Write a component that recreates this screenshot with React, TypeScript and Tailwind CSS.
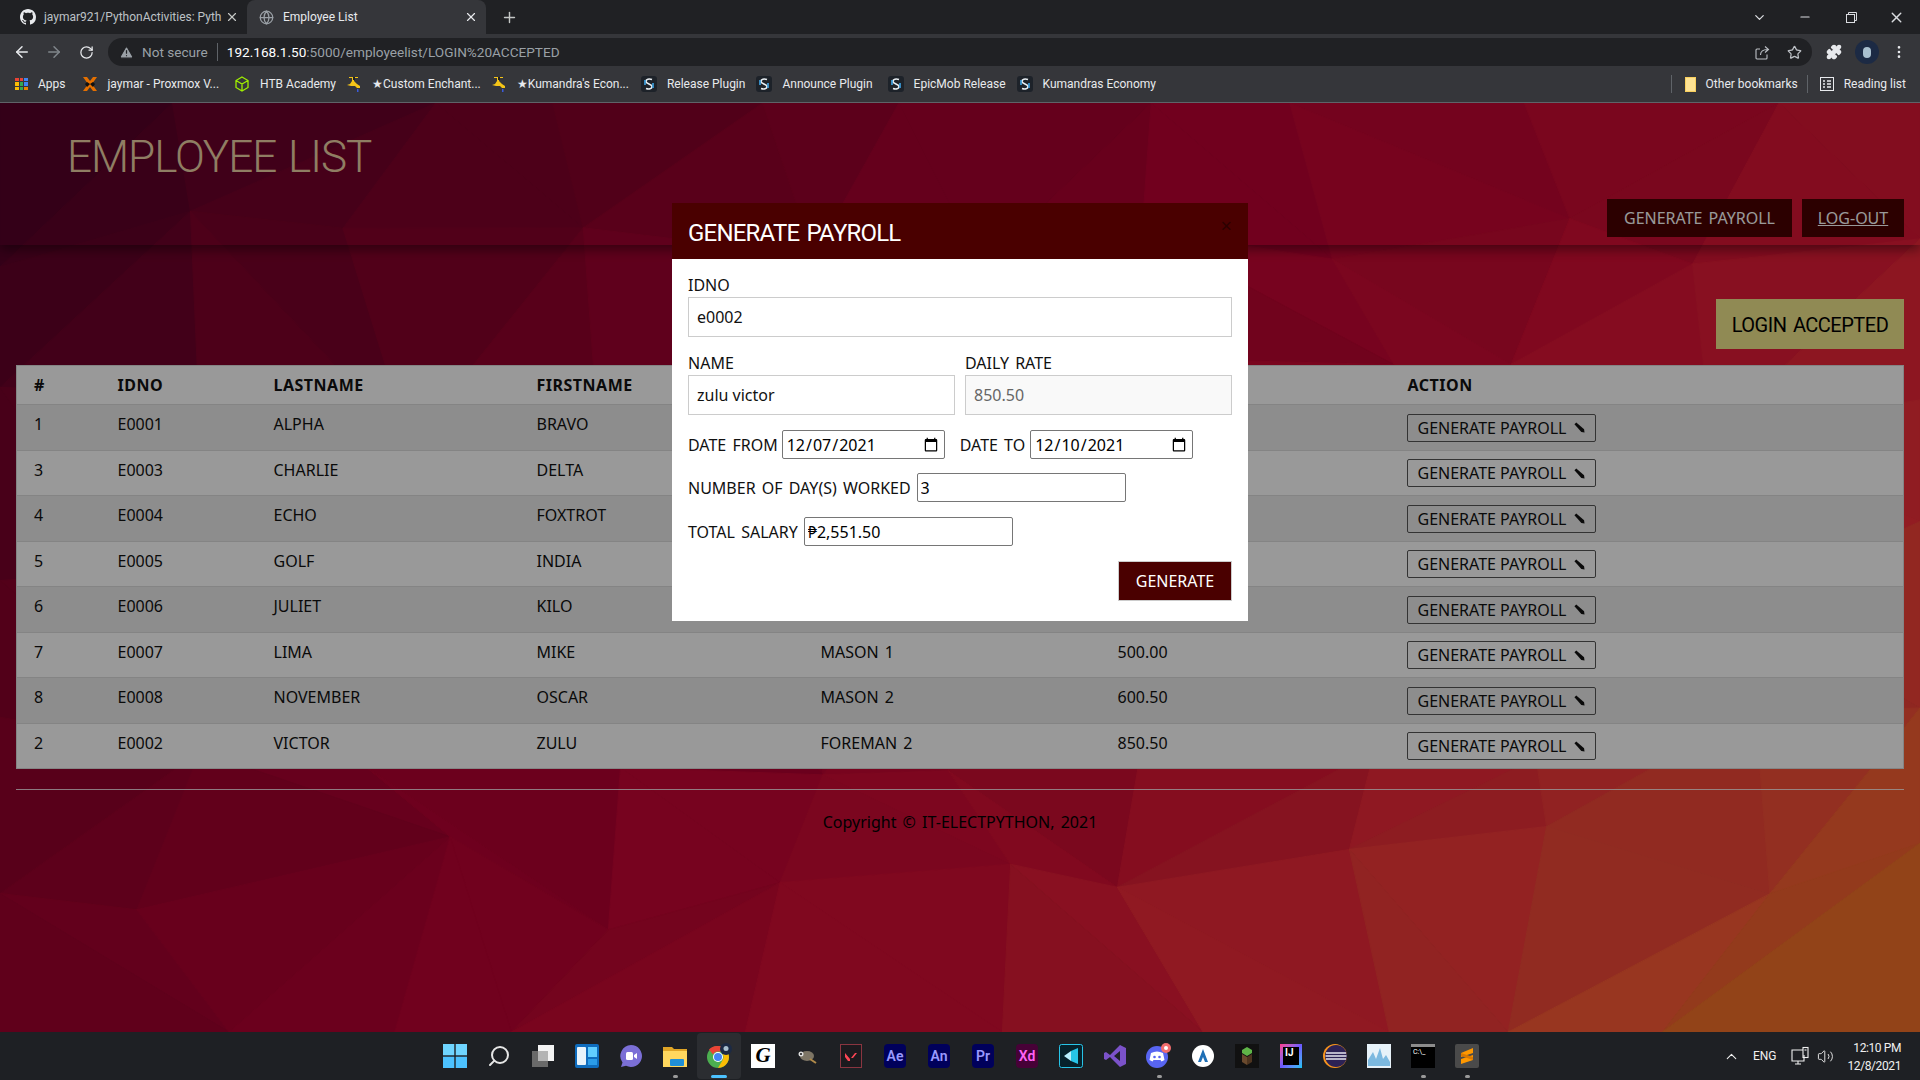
import { ArrowLeft, ArrowRight, RotateCw, Star, EllipsisVertical, Puzzle, X, Plus, ChevronDown, Minus, TriangleAlert, Globe, ChevronUp, Volume2, Search } from "lucide-react";

const uiFont = "font-['Roboto','Liberation_Sans',sans-serif]";
const pageFont = "font-['Noto_Sans','Liberation_Sans',sans-serif] [word-spacing:2px]";

const employees = [
  { no: 1, id: "E0001", last: "ALPHA", first: "BRAVO", position: "FOREMAN 1", rate: "800.00" },
  { no: 3, id: "E0003", last: "CHARLIE", first: "DELTA", position: "CARPENTER 1", rate: "550.00" },
  { no: 4, id: "E0004", last: "ECHO", first: "FOXTROT", position: "CARPENTER 2", rate: "550.50" },
  { no: 5, id: "E0005", last: "GOLF", first: "INDIA", position: "PLUMBER 1", rate: "500.00" },
  { no: 6, id: "E0006", last: "JULIET", first: "KILO", position: "PLUMBER 2", rate: "500.50" },
  { no: 7, id: "E0007", last: "LIMA", first: "MIKE", position: "MASON 1", rate: "500.00" },
  { no: 8, id: "E0008", last: "NOVEMBER", first: "OSCAR", position: "MASON 2", rate: "600.50" },
  { no: 2, id: "E0002", last: "VICTOR", first: "ZULU", position: "FOREMAN 2", rate: "850.50" },
];

const bookmarks = [
  { label: "Release Plugin", margin: "ml-[12px]" },
  { label: "Announce Plugin", margin: "ml-[11px]" },
  { label: "EpicMob Release", margin: "ml-[15px]" },
  { label: "Kumandras Economy", margin: "ml-[11px]" },
];

// colours as seen through the modal backdrop, walked along the page diagonal
const stops: [number, number[]][] = [
  [0, [0x2e, 0x00, 0x18]],
  [0.24, [0x55, 0x00, 0x1a]],
  [0.44, [0x6e, 0x00, 0x1e]],
  [0.63, [0x80, 0x09, 0x1f]],
  [0.76, [0x8f, 0x1b, 0x22]],
  [0.87, [0x95, 0x30, 0x22]],
  [1, [0x95, 0x52, 0x12]],
];

function shade(x: number, y: number, wobble: number) {
  const t = Math.min(1, Math.max(0, (x / 1920) * 0.66 + (y / 930) * 0.34));
  let i = 0;
  while (i < stops.length - 2 && t > stops[i + 1][0]) i++;
  const [t0, a] = stops[i];
  const [t1, b] = stops[i + 1];
  const k = (t - t0) / (t1 - t0);
  const rgb = a.map((v, j) => Math.min(255, Math.max(0, ((v + (b[j] - v) * k) * (1 + wobble)) / 0.6)));
  return `rgb(${rgb.map(Math.round).join(",")})`;
}

function noise(n: number) {
  const s = Math.sin(n * 127.1) * 43758.5453;
  return s - Math.floor(s);
}

function buildFacets() {
  const cols = 10;
  const rows = 6;
  const cw = 1920 / cols;
  const ch = 930 / rows;
  const pt = (c: number, r: number) => {
    const edgeX = c === 0 || c === cols;
    const edgeY = r === 0 || r === rows;
    const seed = c * 31 + r * 17 + 3;
    return [
      c * cw + (edgeX ? 0 : (noise(seed) - 0.5) * cw * 0.7),
      r * ch + (edgeY ? 0 : (noise(seed + 0.5) - 0.5) * ch * 0.7),
    ];
  };
  const out: { points: string; fill: string }[] = [];
  for (let c = 0; c < cols; c++) {
    for (let r = 0; r < rows; r++) {
      const a = pt(c, r);
      const b = pt(c + 1, r);
      const d = pt(c + 1, r + 1);
      const e = pt(c, r + 1);
      const flip = noise(c * 7 + r * 13) > 0.5;
      const tris = flip ? [[a, b, d], [a, d, e]] : [[a, b, e], [b, d, e]];
      tris.forEach((tri, n) => {
        const mx = (tri[0][0] + tri[1][0] + tri[2][0]) / 3;
        const my = (tri[0][1] + tri[1][1] + tri[2][1]) / 3;
        out.push({
          points: tri.map((p) => p.join(",")).join(" "),
          fill: shade(mx, my, (noise(c * 3 + r * 5 + n * 11 + 1) - 0.5) * 0.06),
        });
      });
    }
  }
  return out;
}

const facets = buildFacets();

function Pencil() {
  return (
    <svg width="11" height="11" viewBox="0 0 12 12" className="ml-[7px]">
      <path d="M0.500 2.500 L2.500 0.500 L11 8 L11.500 11.500 L8 11 Z" fill="#111" />
    </svg>
  );
}

function SpigotIcon() {
  return (
    <svg width="16" height="16" viewBox="0 0 16 16" className="shrink-0">
      <path d="M3 1h9v1H8v3l3 3 3 2v2h-3l-2-2H5L1 9l3-1 2-3V2H3z" fill="#f5c518" />
      <rect x="7" y="1" width="2" height="3" fill="#222" />
      <rect x="11" y="13" width="1.500" height="3" fill="#3b5bdb" />
    </svg>
  );
}

function SIcon() {
  return (
    <svg width="16" height="16" viewBox="0 0 16 16" className="shrink-0">
      <rect width="16" height="16" rx="3" fill="#1d2229" />
      <path d="M11 3.500C8 2.500 5 3 5 5.500S11 8 11 10.500 8 13.500 5 12.500" fill="none" stroke="#e8eef2" strokeWidth="1.600" />
      <path d="M4 4v5M12 7v5" stroke="#3fa7e8" strokeWidth="1.600" />
    </svg>
  );
}

function AppsIcon() {
  const colors = ["#ea4335", "#ea4335", "#4285f4", "#fbbc04", "#34a853", "#4285f4", "#fbbc04", "#34a853", "#ea8600"];
  return (
    <div className="grid grid-cols-3 gap-[1px] w-[13px] h-[13px] shrink-0">
      {colors.map((c, i) => (
        <div key={i} className="w-[3.6px] h-[3.6px]" style={{ backgroundColor: c }} />
      ))}
    </div>
  );
}

function Bookmark({ icon, label, className }: { icon: React.ReactNode; label: string; className?: string }) {
  return (
    <div className={`flex items-center gap-[10px] whitespace-nowrap text-[#e8eaed] ${className ?? ""}`}>
      {icon}
      <span>{label}</span>
    </div>
  );
}

function BrowserChrome() {
  return (
    <div className={`${uiFont} text-[12px] bg-[#35363a] border-b border-[#5f6368] shrink-0`}>
      <div className="h-[34px] bg-[#202124] flex items-end text-[#e8eaed]">
        <div className="w-[247px] h-[34px] flex items-center pl-[20px] pr-[8px]">
          <svg width="16" height="16" viewBox="0 0 16 16" fill="#e8eaed" className="shrink-0">
            <path d="M8 0C3.580 0 0 3.580 0 8c0 3.540 2.290 6.530 5.470 7.590.4.070.55-.17.55-.38 0-.19-.01-.82-.01-1.490-2.010.37-2.530-.49-2.690-.94-.09-.23-.48-.94-.82-1.130-.28-.15-.68-.52-.01-.53.63-.01 1.080.58 1.230.82.72 1.210 1.870.87 2.330.66.070-.52.28-.87.51-1.070-1.780-.2-3.640-.89-3.640-3.950 0-.87.31-1.590.82-2.150-.08-.2-.36-1.020.08-2.120 0 0 .67-.21 2.200.82.64-.18 1.320-.27 2-.27s1.360.09 2 .27c1.530-1.040 2.200-.82 2.200-.82.44 1.100.16 1.920.08 2.120.51.56.82 1.270.82 2.150 0 3.070-1.870 3.750-3.650 3.950.29.25.54.73.54 1.480 0 1.070-.01 1.930-.01 2.200 0 .21.15.46.55.38A8.013 8.013 0 0016 8c0-4.420-3.580-8-8-8z" />
          </svg>
          <span className="ml-[8px] whitespace-nowrap text-[#bdc1c6]">jaymar921/PythonActivities: Pyth</span>
          <X size={14} className="ml-auto text-[#c4c7c5] shrink-0" />
        </div>
        <div className="w-[239px] h-[34px] bg-[#35363a] rounded-t-lg flex items-center pl-[12px] pr-[8px]">
          <Globe size={15} className="text-[#9aa0a6] shrink-0" />
          <span className="ml-[9px]">Employee List</span>
          <X size={14} className="ml-auto text-[#e8eaed] shrink-0" />
        </div>
        <Plus size={17} className="ml-[15px] mb-[8px] text-[#c4c7c5]" />
        <div className="ml-auto flex items-center h-[34px] text-[#dadce0]">
          <ChevronDown size={15} className="mr-[31px]" />
          <Minus size={14} className="mr-[34px]" />
          <svg width="11" height="11" viewBox="0 0 11 11" fill="none" stroke="currentColor" className="mr-[31px]">
            <rect x="0.500" y="2.500" width="8" height="8" />
            <path d="M2.500 2.500v-2h8v8h-2" />
          </svg>
          <X size={17} className="mr-[15px]" />
        </div>
      </div>

      <div className="h-[36px] flex items-center text-[#9aa0a6]">
        <ArrowLeft size={18} className="ml-[13px] text-[#e8eaed]" />
        <ArrowRight size={18} className="ml-[14px] text-[#80868b]" />
        <RotateCw size={15} className="ml-[16px] text-[#e8eaed]" />
        <div className="ml-[14px] w-[1704px] h-[28px] bg-[#202124] rounded-full flex items-center pl-[11px] pr-[10px] text-[13.6px]">
          <TriangleAlert size={15} fill="#9aa0a6" stroke="#202124" className="shrink-0" />
          <span className="ml-[8px]">Not secure</span>
          <span className="mx-[9px] h-[18px] w-px bg-[#5f6368]" />
          <span className="text-white">192.168.1.50</span>
          <span>:5000/employeelist/LOGIN%20ACCEPTED</span>
          <svg width="15" height="15" viewBox="0 0 15 15" fill="none" stroke="#bdc1c6" strokeWidth="1.100" className="ml-auto">
            <path d="M12 9.500V13a1 1 0 0 1-1 1H2a1 1 0 0 1-1-1V5a1 1 0 0 1 1-1h3" />
            <path d="M5.500 10c0-3.500 2.500-5.500 7-5.500M10 1.500l3.500 3-3.500 3" />
          </svg>
          <Star size={15} className="ml-[17px] text-[#bdc1c6]" />
        </div>
        <Puzzle size={16} fill="#e8eaed" className="ml-[14px] text-[#e8eaed]" />
        <div className="ml-[13px] w-[24px] h-[24px] rounded-full bg-[#1c2a44] flex items-center justify-center">
          <div className="w-[8px] h-[11px] rounded-full bg-[#a9c0cf]" />
        </div>
        <EllipsisVertical size={16} className="ml-[12px] text-[#e8eaed]" />
      </div>

      <div className="h-[32px] flex items-center pl-[15px] pr-[14px] pb-[4px]">
        <Bookmark icon={<AppsIcon />} label="Apps" />
        <Bookmark
          className="ml-[16px]"
          label="jaymar - Proxmox V..."
          icon={
            <svg width="16" height="16" viewBox="0 0 16 16" className="shrink-0">
              <path d="M1 1h4l3 4 3-4h4l-5 7 5 7h-4l-3-4-3 4H1l5-7z" fill="#e57000" />
              <path d="M5 6l3 2-3 3-2-3zM11 6l2 2-2 3-3-3z" fill="#111" />
            </svg>
          }
        />
        <Bookmark
          className="ml-[15px]"
          label="HTB Academy"
          icon={
            <svg width="16" height="16" viewBox="0 0 16 16" fill="none" stroke="#9fef00" strokeWidth="1.300" className="shrink-0">
              <path d="M8 1l6 3.500v7L8 15l-6-3.500v-7zM2 4.500L8 8l6-3.500M8 8v7" />
            </svg>
          }
        />
        <Bookmark className="ml-[10px]" icon={<SpigotIcon />} label="★Custom Enchant..." />
        <Bookmark className="ml-[10px]" icon={<SpigotIcon />} label="★Kumandra's Econ..." />
        {bookmarks.map((b) => (
          <Bookmark key={b.label} className={b.margin} icon={<SIcon />} label={b.label} />
        ))}
        <div className="ml-auto h-[18px] w-px bg-[#5f6368]" />
        <Bookmark
          className="ml-[13px]"
          label="Other bookmarks"
          icon={<div className="w-[11px] h-[15px] bg-[#fde293] border border-[#f9cf5d] shrink-0" />}
        />
        <div className="ml-[9px] h-[18px] w-px bg-[#5f6368]" />
        <Bookmark
          className="ml-[12px]"
          label="Reading list"
          icon={
            <svg width="14" height="14" viewBox="0 0 14 14" fill="none" stroke="#e8eaed" className="shrink-0">
              <rect x="0.500" y="0.500" width="13" height="13" />
              <path d="M3 4h2M7 4h4M3 7h2M7 7h4M3 10h2M7 10h4" strokeWidth="1.500" />
            </svg>
          }
        />
      </div>
    </div>
  );
}

function EmployeeTable() {
  const heads = ["#", "IDNO", "LASTNAME", "FIRSTNAME", "POSITION", "RATE", "ACTION"];
  return (
    <table className="w-[1888px] mx-auto table-fixed bg-white text-[16px] text-[#111] border border-[#ddd] border-collapse">
      <colgroup>
        <col className="w-[84px]" />
        <col className="w-[156px]" />
        <col className="w-[263px]" />
        <col className="w-[284px]" />
        <col className="w-[297px]" />
        <col className="w-[290px]" />
        <col />
      </colgroup>
      <thead>
        <tr className="h-[39px]">
          {heads.map((h) => (
            <th key={h} className="text-left font-bold tracking-[0.5px] px-[17px] align-middle">
              {h}
            </th>
          ))}
        </tr>
      </thead>
      <tbody>
        {employees.map((e, i) => (
          <tr key={e.id} className={`border-t border-[#ddd] ${i % 2 === 0 ? "bg-[#ebebeb] h-[46px]" : "bg-white h-[45px]"}`}>
            <td className="px-[17px] pt-[7px] align-top">{e.no}</td>
            <td className="px-[17px] pt-[7px] align-top">{e.id}</td>
            <td className="px-[17px] pt-[7px] align-top">{e.last}</td>
            <td className="px-[17px] pt-[7px] align-top">{e.first}</td>
            <td className="px-[17px] pt-[7px] align-top">{e.position}</td>
            <td className="px-[17px] pt-[7px] align-top">{e.rate}</td>
            <td className="pl-[16px] pr-[17px] align-middle">
              <button className="h-[28px] w-[189px] flex items-center justify-center bg-transparent border border-[#555] rounded-[2px] text-[16px] text-[#111]">
                GENERATE PAYROLL
                <Pencil />
              </button>
            </td>
          </tr>
        ))}
      </tbody>
    </table>
  );
}

function PayrollModal() {
  const boxed = "h-[40px] border border-[#ccc] px-[8px] text-[16px] outline-none";
  const plain = "h-[29px] border border-[#767676] rounded-[2px] px-[3px] text-[16px] text-black outline-none bg-white";
  return (
    <div className="absolute left-[672px] top-[100px] w-[576px] h-[418px] bg-white text-[16px] text-[#111]">
      <div className="relative h-[56px] bg-[#4a0000] flex items-center px-[16px]">
        <h2 className={`${uiFont} pt-[3px] text-[24px] tracking-[-0.8px] text-white font-normal`}>GENERATE PAYROLL</h2>
        <span className="absolute right-[16px] top-[8px] text-[20px] text-[#2c0000]">×</span>
      </div>
      <div className="px-[16px] pt-[14px]">
        <label className="block leading-[24px]">IDNO</label>
        <input className={`${boxed} w-full`} defaultValue="e0002" />
        <div className="mt-[14px] grid grid-cols-[267px_267px] gap-x-[10px]">
          <div>
            <label className="block leading-[24px]">NAME</label>
            <input className={`${boxed} w-full`} defaultValue="zulu victor" />
          </div>
          <div>
            <label className="block leading-[24px]">DAILY RATE</label>
            <input className={`${boxed} w-full bg-[#f9f9f9] text-[#666]`} value="850.50" readOnly />
          </div>
        </div>
        <div className="mt-[15px] flex items-center">
          <label className="leading-[24px] mr-[4px]">DATE FROM</label>
          <input type="date" className={`${plain} w-[163px]`} defaultValue="2021-12-07" />
          <label className="leading-[24px] ml-[15px] mr-[5px]">DATE TO</label>
          <input type="date" className={`${plain} w-[163px]`} defaultValue="2021-12-10" />
        </div>
        <div className="mt-[14px] flex items-center">
          <label className="leading-[24px] mr-[6px]">NUMBER OF DAY(S) WORKED</label>
          <input className={`${plain} w-[209px]`} defaultValue="3" />
        </div>
        <div className="mt-[15px] flex items-center">
          <label className="leading-[24px] mr-[6px]">TOTAL SALARY</label>
          <input className={`${plain} w-[209px]`} defaultValue="₱2,551.50" />
        </div>
        <div className="mt-[15px] flex justify-end">
          <button className="w-[114px] h-[40px] bg-[#4a0000] border border-[#ccc] text-white text-[16px]">GENERATE</button>
        </div>
      </div>
    </div>
  );
}

function Chip({ bg, fg, text }: { bg: string; fg: string; text: string }) {
  return (
    <div className={`w-[22px] h-[24px] rounded-[4px] flex items-center justify-center text-[14px] font-semibold ${bg} ${fg}`}>{text}</div>
  );
}

const taskIcons: { key: string; dot?: boolean; node: React.ReactNode }[] = [
  {
    key: "start",
    node: (
      <svg width="24" height="24" viewBox="0 0 24 24" fill="#4cc2ff">
        <rect width="11.300" height="11.300" fill="#6fd5ff" />
        <rect x="12.700" width="11.300" height="11.300" fill="#6fd5ff" />
        <rect y="12.700" width="11.300" height="11.300" />
        <rect x="12.700" y="12.700" width="11.300" height="11.300" />
      </svg>
    ),
  },
  { key: "search", node: <Search size={24} className="text-[#e6e6e6] -scale-x-100" /> },
  {
    key: "tasks",
    node: (
      <svg width="24" height="24" viewBox="0 0 24 24">
        <rect x="7" y="1" width="16" height="16" fill="#f3f3f3" />
        <rect x="1" y="7" width="16" height="16" fill="#6a6a6a" />
        <rect x="7" y="7" width="10" height="10" fill="#b4b4b4" />
      </svg>
    ),
  },
  {
    key: "widgets",
    node: (
      <svg width="24" height="24" viewBox="0 0 24 24">
        <rect width="24" height="24" rx="2" fill="#0f6cbd" />
        <rect x="2" y="3" width="9" height="18" rx="1" fill="#e8f3fb" />
        <rect x="13" y="3" width="9" height="10" fill="#62cdff" />
        <rect x="13" y="15" width="9" height="6" fill="#2b9ce8" />
      </svg>
    ),
  },
  {
    key: "chat",
    node: (
      <svg width="24" height="24" viewBox="0 0 24 24">
        <path d="M12 1a11 11 0 1 1-5 20.800L2 23l1.500-4.500A11 11 0 0 1 12 1z" fill="#7b6fd6" />
        <rect x="7" y="8" width="7" height="8" rx="1.500" fill="#fff" />
        <path d="M15 11l3-2v6l-3-2z" fill="#fff" />
      </svg>
    ),
  },
  {
    key: "files",
    dot: true,
    node: (
      <svg width="24" height="24" viewBox="0 0 24 24">
        <path d="M0 3h9l2 2h13v18H0z" fill="#e0a526" />
        <rect y="7" width="24" height="16" fill="#ffd75e" />
        <rect x="7" y="15" width="14" height="7" rx="1" fill="#1f8fd6" />
      </svg>
    ),
  },
  {
    key: "chrome",
    node: (
      <svg width="26" height="26" viewBox="0 0 26 26">
        <circle cx="12" cy="14" r="11" fill="#4caf50" />
        <path d="M12 3a11 11 0 0 1 9.500 5.500H12a5.500 5.500 0 0 0-5 3L3 6.500A11 11 0 0 1 12 3z" fill="#ea4335" />
        <path d="M21.500 8.500A11 11 0 0 1 12 25l4.800-8.300A5.500 5.500 0 0 0 16.500 11z" fill="#fbbc04" />
        <circle cx="12" cy="14" r="5" fill="#fff" />
        <circle cx="12" cy="14" r="4" fill="#4285f4" />
        <circle cx="20" cy="6" r="6" fill="#1c2a44" />
        <circle cx="20" cy="5.500" r="2.500" fill="#a9c0cf" />
      </svg>
    ),
  },
  {
    key: "g",
    node: <div className="w-[24px] h-[24px] bg-white flex items-center justify-center text-black text-[21px] font-bold italic font-['Liberation_Serif',serif]">G</div>,
  },
  {
    key: "gimp",
    node: (
      <svg width="24" height="24" viewBox="0 0 24 24">
        <ellipse cx="12" cy="12" rx="7" ry="5" fill="#7d7565" />
        <circle cx="6" cy="10" r="2.500" fill="#ddd" />
        <circle cx="6" cy="10" r="1" fill="#111" />
        <path d="M15 15l6 4" stroke="#b08a4a" strokeWidth="2" />
      </svg>
    ),
  },
  {
    key: "valorant",
    node: (
      <svg width="22" height="24" viewBox="0 0 22 24">
        <rect x="0.500" y="0.500" width="21" height="23" fill="#1c1a1e" stroke="#8a3540" />
        <path d="M5 9l5 6v2H8L5 13zM17 9l-4 5h-2l4-5z" fill="#ff4655" />
      </svg>
    ),
  },
  { key: "ae", node: <Chip bg="bg-[#00005b]" fg="text-[#9999ff]" text="Ae" /> },
  { key: "an", node: <Chip bg="bg-[#00005b]" fg="text-[#9999ff]" text="An" /> },
  { key: "pr", node: <Chip bg="bg-[#00005b]" fg="text-[#9999ff]" text="Pr" /> },
  { key: "xd", node: <Chip bg="bg-[#470137]" fg="text-[#ff61f6]" text="Xd" /> },
  {
    key: "kine",
    node: (
      <svg width="24" height="24" viewBox="0 0 24 24">
        <rect x="0.500" y="0.500" width="23" height="23" rx="2" fill="#06222c" stroke="#27c4e8" />
        <path d="M12 7l7-3v16l-7-3z" fill="#27c4e8" />
        <path d="M5 12l7-5v10z" fill="#b8f0ff" />
      </svg>
    ),
  },
  {
    key: "vs",
    node: (
      <svg width="24" height="24" viewBox="0 0 24 24">
        <path d="M17 1l6 3v16l-6 3-10-10-4 3-2-1V9l2-1 4 3zM17 7l-6 5 6 5z" fill="#7b52c9" />
      </svg>
    ),
  },
  {
    key: "discord",
    dot: true,
    node: (
      <svg width="28" height="28" viewBox="0 0 28 28">
        <circle cx="12" cy="15" r="11" fill="#5865f2" />
        <path d="M6 11c4-2 8-2 12 0l1.500 7-3 1.500-1-1.500h-7l-1 1.500-3-1.500z" fill="#fff" />
        <circle cx="9.500" cy="15" r="1.300" fill="#5865f2" />
        <circle cx="14.500" cy="15" r="1.300" fill="#5865f2" />
        <circle cx="21" cy="6" r="5" fill="#f26d6d" />
        <circle cx="21" cy="6" r="2" fill="#fff" />
      </svg>
    ),
  },
  {
    key: "circle",
    node: (
      <svg width="24" height="24" viewBox="0 0 24 24">
        <circle cx="12" cy="12" r="11" fill="#fff" />
        <path d="M12 5l5 13h-3l-2-5-2 5H7z" fill="#1f6fb5" />
      </svg>
    ),
  },
  {
    key: "mc",
    node: (
      <svg width="24" height="24" viewBox="0 0 24 24">
        <rect width="24" height="24" fill="#111" />
        <path d="M12 3l5 3v3l-5 3-5-3V6z" fill="#5fb548" />
        <path d="M7 10l5 3v8l-5-3z" fill="#6a4a2e" />
        <path d="M17 10l-5 3v8l5-3z" fill="#4e3520" />
      </svg>
    ),
  },
  {
    key: "ij",
    node: (
      <div className="w-[22px] h-[24px] bg-gradient-to-br from-[#ff318c] via-[#6b57ff] to-[#07c3f2] p-[3px]">
        <div className="w-full h-full bg-black text-white text-[10px] font-bold leading-[11px] pl-[2px]">IJ</div>
      </div>
    ),
  },
  {
    key: "eclipse",
    node: (
      <svg width="24" height="24" viewBox="0 0 24 24">
        <circle cx="12" cy="12" r="12" fill="#f7941e" />
        <circle cx="13" cy="12" r="11" fill="#2c2255" />
        <path d="M3 9h20M2.500 12h21M3 15h20" stroke="#e6e6f0" strokeWidth="1.600" />
      </svg>
    ),
  },
  {
    key: "perf",
    node: (
      <svg width="24" height="24" viewBox="0 0 24 24">
        <rect width="24" height="24" fill="#e7f2f9" />
        <path d="M1 22V16l5-8 3 7 4-11 3 11 3-4 4 7v4z" fill="#7cb9e0" />
      </svg>
    ),
  },
  {
    key: "cmd",
    dot: true,
    node: (
      <div className="w-[24px] h-[24px] bg-black border-t-[3px] border-[#8c8c8c] text-white text-[7px] leading-[10px] pl-[2px]">C:\_</div>
    ),
  },
  {
    key: "sublime",
    dot: true,
    node: (
      <svg width="24" height="24" viewBox="0 0 24 24">
        <rect width="24" height="24" rx="2" fill="#4a4a4a" />
        <path d="M18 4v5L6 13V9zM18 11v5L6 20v-5z" fill="#ff9800" />
        <path d="M6 9l12 4v3L6 12z" fill="#d97800" />
      </svg>
    ),
  },
];

function Taskbar() {
  return (
    <div className={`${uiFont} h-[48px] bg-[#1e2024] flex items-center shrink-0 text-[12px] text-[#f0f0f0] pl-[433px]`}>
      {taskIcons.map((t) => (
        <div
          key={t.key}
          className={`relative w-[44px] h-[46px] flex items-center justify-center rounded-[4px] ${t.key === "chrome" ? "bg-[#2b2d31]" : ""}`}
        >
          {t.node}
          {t.dot && <div className="absolute bottom-[1px] left-[20px] w-[5px] h-[3px] rounded-full bg-[#9a9a9a]" />}
          {t.key === "chrome" && <div className="absolute bottom-[1px] left-[14px] w-[16px] h-[3px] rounded-full bg-[#4cc2ff]" />}
        </div>
      ))}
      <div className="ml-auto flex items-center pr-[19px]">
        <ChevronUp size={17} strokeWidth={1.500} />
        <span className="ml-[13px]">ENG</span>
        <svg width="20" height="20" viewBox="0 0 20 20" fill="none" stroke="currentColor" strokeWidth="1.100" className="ml-[14px]">
          <path d="M13 4H2v11h12V9M8 15v3M5 18h6" />
          <rect x="13" y="1.500" width="5" height="10" />
          <path d="M14.500 4h2" />
        </svg>
        <Volume2 size={17} strokeWidth={1.300} className="ml-[7px]" />
        <div className="ml-[13px] pt-[2px] text-right leading-[18px] tracking-[-0.4px]">
          <div>12:10 PM</div>
          <div>12/8/2021</div>
        </div>
      </div>
    </div>
  );
}

export default function App() {
  return (
    <div className="h-screen flex flex-col overflow-hidden bg-[#202124]">
      <BrowserChrome />
      <main className={`${pageFont} relative flex-1 overflow-hidden`}>
        <svg className="absolute inset-0 w-full h-full" viewBox="0 0 1920 930" preserveAspectRatio="none">
          {facets.map((f, i) => (
            <polygon key={i} points={f.points} fill={f.fill} stroke={f.fill} />
          ))}
        </svg>

        <div className="relative">
          <header className="h-[142px] flex items-end justify-between pl-[67px] pr-[16px] pb-[8px] shadow-[0_5px_10px_rgba(0,0,0,0.4)]">
            <h1 className={`${uiFont} self-start mt-[27px] text-[44px] leading-[54px] tracking-[-1px] font-light text-[#eed2a5]`}>EMPLOYEE LIST</h1>
            <nav className="flex gap-[10px] text-[16px] text-white">
              <a className="w-[185px] h-[38px] bg-[#4a0000] flex items-center justify-center">GENERATE PAYROLL</a>
              <a className="w-[102px] h-[38px] bg-[#4a0000] flex items-center justify-center underline">LOG-OUT</a>
            </nav>
          </header>

          <div className="flex justify-end pr-[16px] pt-[54px]">
            <div className={`${uiFont} w-[188px] h-[50px] pt-[1px] bg-[#f0e68c] text-black text-[20px] tracking-[-0.5px] flex items-center justify-center`}>LOGIN ACCEPTED</div>
          </div>

          <div className="mt-[16px]">
            <EmployeeTable />
          </div>

          <hr className="mt-[20px] mx-[16px] border-t border-[#fff]/80" />
          <p className="mt-[20px] text-center text-[16px] leading-[24px] text-black">Copyright © IT-ELECTPYTHON, 2021</p>
        </div>

        <div className="absolute inset-0 bg-black/40" />
        <PayrollModal />
      </main>
      <Taskbar />
    </div>
  );
}
